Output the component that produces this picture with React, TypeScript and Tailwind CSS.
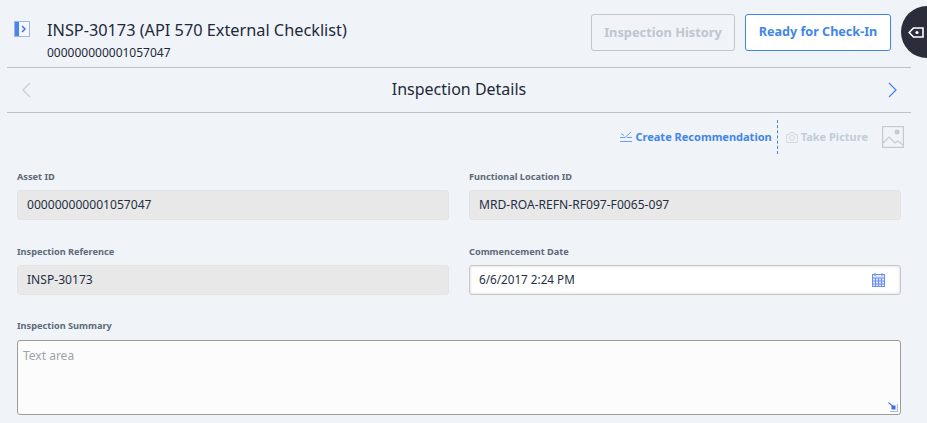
const font = "font-['Noto_Sans','Open_Sans',sans-serif]";

function Field({ label, value }: { label: string; value: string }) {
  return (
    <div className="flex flex-col">
      <label className="h-[22px] pt-[2px] text-[9.2px] leading-[14px] font-bold text-[#5c6a7a]">{label}</label>
      <div className="flex h-[30px] items-center rounded-[3px] border border-[#e2e5e8] bg-[#e8e8e8] px-[9px] text-[12.1px] text-[#1f3044]">
        {value}
      </div>
    </div>
  );
}

function CalendarIcon() {
  return (
    <svg width="13" height="14" viewBox="0 0 13 14" fill="#dfe6fb" stroke="#6f8ff2" strokeWidth="1">
      <rect x="0.5" y="1.5" width="12" height="12" />
      <path d="M3 0v3M10 0v3M0 5h13M0 8h13M0 11h13M3.5 5v9M6.5 5v9M9.5 5v9" />
    </svg>
  );
}

function ResizeIcon() {
  return (
    <svg width="10" height="10" viewBox="0 0 10 10" fill="none">
      <path d="M0.5 0.5L5 4.5" stroke="#4a7fe8" strokeWidth="1.2" />
      <rect x="3.5" y="3.5" width="4" height="4" fill="#3b6fe0" />
      <path d="M9.5 2v7.5H2" stroke="#a9b8f5" strokeWidth="1.2" />
    </svg>
  );
}

export default function App() {
  return (
    <div className={`relative h-[423px] w-[927px] overflow-hidden bg-[#f0f3f7] ${font}`}>
      <div className="absolute top-[6px] left-[901px] flex h-[52px] w-[52px] items-center rounded-full bg-[#2b2d3b] pl-[7px]">
        <svg width="16" height="11" viewBox="0 0 16 11" fill="none" stroke="#fff" strokeWidth="1.6">
          <path d="M1.2 5.5L5.5 1h9.5v9H5.5z" />
          <circle cx="9" cy="5.5" r="1.6" fill="#fff" stroke="none" />
        </svg>
      </div>

      <div className="ml-[7px] w-[904px]">
        <header className="flex h-[68px] border-b border-[#bcc3ca]">
          <div className="ml-[7px] mt-[21px] flex h-[16px] w-[16px] border border-[#9db4f2] bg-[#f4f7fc]">
            <div className="w-[4px] bg-[#4a85ec]" />
            <svg className="ml-[2px] mt-[3px]" width="6" height="8" viewBox="0 0 6 8" fill="none" stroke="#4f6fe8" strokeWidth="1.5">
              <path d="M1 1l3 3-3 3" />
            </svg>
          </div>
          <div className="ml-[17px] flex flex-col pt-[18px]">
            <h1 className="text-[16.3px] leading-[24px] font-normal text-[#1d2a3a]">INSP-30173 (API 570 External Checklist)</h1>
            <p className="mt-[3px] text-[12px] leading-[16px] text-[#1d2a3a]">000000000001057047</p>
          </div>
          <div className="ml-auto mr-[20px] mt-[14px] flex h-[37px] gap-[10px]">
            <button className="h-[37px] w-[144px] rounded-[3px] border border-[#bcc7d0] text-[12.8px] font-bold text-[#bcc7d0]">Inspection History</button>
            <button className="h-[37px] w-[146px] rounded-[3px] border border-[#3f86e8] bg-white text-[12.6px] font-bold text-[#3f86e8]">Ready for Check-In</button>
          </div>
        </header>

        <nav className="flex h-[45px] items-center justify-between border-b border-[#bcc3ca] pl-[14px] pr-[14px]">
          <svg width="10" height="16" viewBox="0 0 10 16" fill="none" stroke="#c5ced6" strokeWidth="1.2"><path d="M9 1L2 8l7 7" /></svg>
          <h2 className="-mt-[2px] text-[16px] font-normal text-[#1d2a3a]">Inspection Details</h2>
          <svg width="10" height="16" viewBox="0 0 10 16" fill="none" stroke="#3f86e8" strokeWidth="1.2"><path d="M2 1l7 7-7 7" /></svg>
        </nav>

        <div className="flex h-[47px] items-center justify-end pr-[7px] pt-[1px]">
          <svg width="12" height="12" viewBox="0 0 12 12" fill="none" stroke="#6f9ff0" strokeWidth="1">
            <path d="M0 6.5h5L11 1M7 6.5h5M0 10.5h12M1 2.5l3 2" />
          </svg>
          <span className="ml-[3px] text-[11px] font-bold text-[#3f86e8]">Create Recommendation</span>
          <div className="ml-[5px] h-[34px] border-l border-dashed border-[#3f86e8]" />
          <svg className="ml-[8px]" width="12" height="11" viewBox="0 0 12 11" fill="none" stroke="#d3dae0" strokeWidth="1">
            <path d="M0.5 2.5h3l1-2h3l1 2h3v8h-11z" />
            <circle cx="6" cy="6" r="2.5" />
          </svg>
          <span className="ml-[3px] text-[11px] font-bold text-[#c3ccd4]">Take Picture</span>
          <svg className="ml-[14px]" width="22" height="22" viewBox="0 0 22 22" fill="none" stroke="#c3ccd2" strokeWidth="1.2">
            <rect x="0.6" y="0.6" width="20.8" height="20.8" />
            <path d="M1 17l6-6 6 6 3-2 5 4" />
            <circle cx="15" cy="6" r="2.5" fill="#c3ccd2" stroke="none" />
          </svg>
        </div>

        <form className="mx-[10px] w-[884px]">
          <div className="grid grid-cols-2 gap-x-[20px] gap-y-[23px] pt-[8px]">
            <Field label="Asset ID" value="000000000001057047" />
            <Field label="Functional Location ID" value="MRD-ROA-REFN-RF097-F0065-097" />
            <Field label="Inspection Reference" value="INSP-30173" />
            <div className="flex flex-col">
              <label className="h-[22px] pt-[2px] text-[9.2px] leading-[14px] font-bold text-[#5c6a7a]">Commencement Date</label>
              <div className="flex h-[30px] items-center justify-between rounded-[3px] border border-[#c6c9cb] bg-white pl-[9px] pr-[15px] text-[11.7px] text-[#1f3044] shadow-[inset_0_0_3px_rgba(0,0,0,0.18)]">
                6/6/2017 2:24 PM
                <CalendarIcon />
              </div>
            </div>
          </div>
          <div className="mt-[23px] flex flex-col">
            <label className="h-[22px] pt-[1px] text-[9.2px] leading-[14px] font-bold text-[#5c6a7a]">Inspection Summary</label>
            <div className="relative h-[75px] rounded-[3px] border border-[#9b9b9b] bg-[#fcfcfc] px-[5px] pt-[6px] text-[12px] text-[#9aa5b0]">
              Text area
              <div className="absolute right-[2px] bottom-[2px] flex"><ResizeIcon /></div>
            </div>
          </div>
        </form>
      </div>
    </div>
  );
}
